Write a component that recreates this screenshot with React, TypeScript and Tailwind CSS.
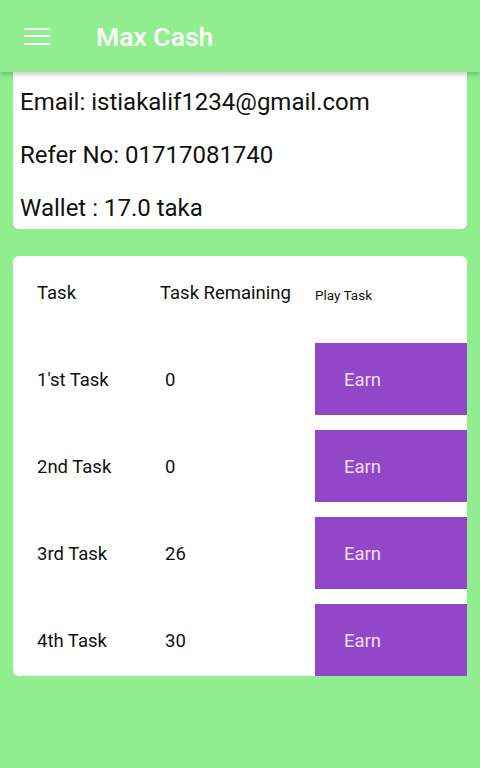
import React from 'react';

interface TaskRow {
  name: string;
  remaining: string;
}

const tasks: TaskRow[] = [
  { name: "1'st Task", remaining: '0' },
  { name: '2nd Task', remaining: '0' },
  { name: '3rd Task', remaining: '26' },
  { name: '4th Task', remaining: '30' },
];

const App: React.FC = () => {
  return (
    <div
      className="min-h-screen w-full bg-[#90ee90]"
      style={{ fontFamily: 'Roboto, "Noto Sans", sans-serif' }}
    >
      {/* app bar */}
      <header className="relative z-10 flex h-[72px] items-center bg-[#90ee90] shadow-[0_3px_4px_rgba(0,0,0,0.18)]">
        <div className="ml-[24px] flex w-[26px] flex-col gap-[5.5px]">
          <span className="block h-[2px] w-full bg-white" />
          <span className="block h-[2px] w-full bg-white" />
          <span className="block h-[2px] w-full bg-white" />
        </div>
        <h1 className="ml-[46px] pt-[2px] text-[26.5px] font-medium text-white">Max Cash</h1>
      </header>

      {/* profile card */}
      <div className="mx-[13px] flex h-[157px] flex-col rounded-b-md bg-white px-[7px] pt-[4px] text-[24px] text-[#111]">
        <p className="leading-[53px]">Email: istiakalif1234@gmail.com</p>
        <p className="leading-[53px]">Refer No: 01717081740</p>
        <p className="leading-[53px]">Wallet : 17.0 taka</p>
      </div>

      {/* tasks card */}
      <div className="mx-[13px] mt-[27px] rounded-md bg-white">
        <div className="flex h-[72px] items-center pt-[3px] text-[18.5px] text-[#111]">
          <span className="w-[147px] pl-[24px]">Task</span>
          <span className="w-[155px]">Task Remaining</span>
          <span className="pt-[4px] text-[13.5px]">Play Task</span>
        </div>
        {tasks.map((t) => (
          <div key={t.name} className="mt-[15px] flex h-[72px] items-center text-[18.5px] text-[#111]">
            <span className="w-[147px] pl-[24px] pt-[3px]">{t.name}</span>
            <span className="w-[155px] pl-[5px] pt-[3px]">{t.remaining}</span>
            <button className="flex h-full flex-1 items-center bg-[#9147c8] pl-[29px] pt-[3px] text-[18.5px] text-[#f6dcf6]">
              Earn
            </button>
          </div>
        ))}
      </div>
    </div>
  );
};

export default App;
